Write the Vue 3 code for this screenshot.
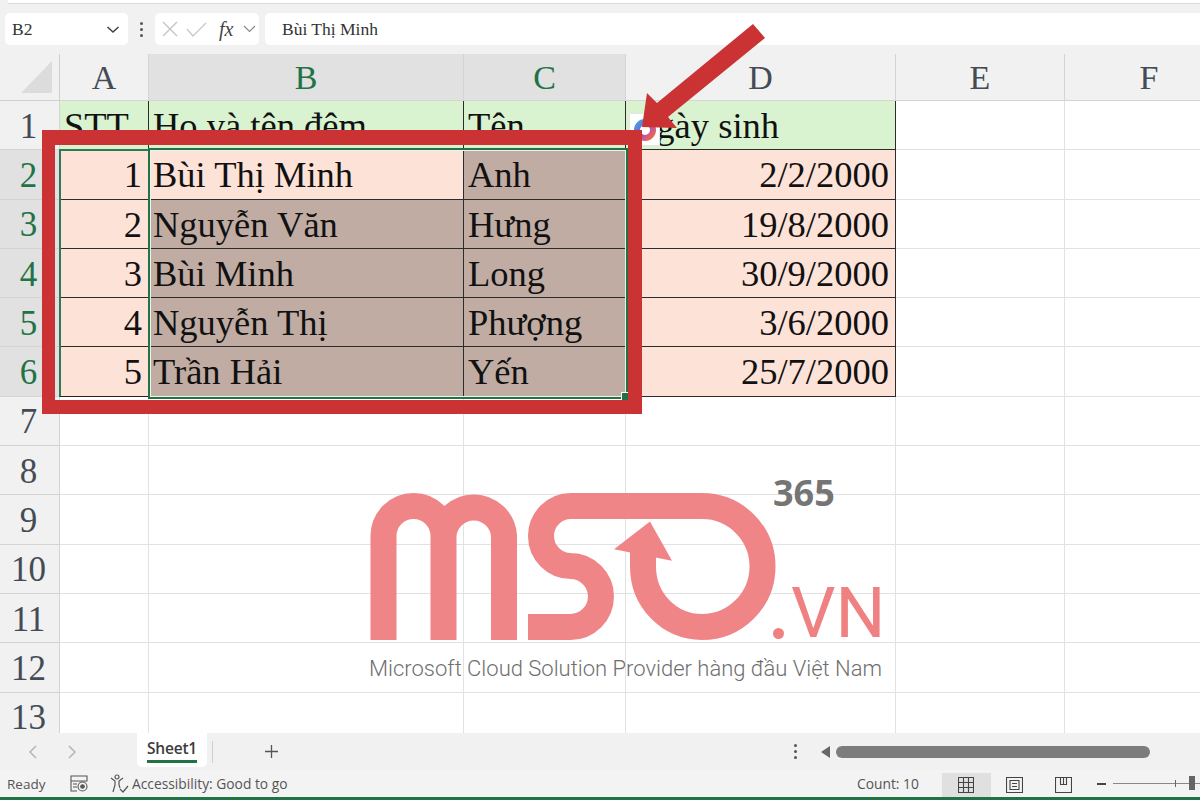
<script setup>
const cols = ['A', 'B', 'C', 'D', 'E', 'F']
const rowNums = Array.from({ length: 13 }, (_, i) => i + 1)
const data = {
  1: [['STT', 'head'], ['Họ và tên đệm', 'head'], ['Tên', 'head'], ['Ngày sinh', 'head']],
  2: [['1', 'pink num'], ['Bùi Thị Minh', 'pink'], ['Anh', 'brown'], ['2/2/2000', 'pink num']],
  3: [['2', 'pink num'], ['Nguyễn Văn', 'brown'], ['Hưng', 'brown'], ['19/8/2000', 'pink num']],
  4: [['3', 'pink num'], ['Bùi Minh', 'brown'], ['Long', 'brown'], ['30/9/2000', 'pink num']],
  5: [['4', 'pink num'], ['Nguyễn Thị', 'brown'], ['Phượng', 'brown'], ['3/6/2000', 'pink num']],
  6: [['5', 'pink num'], ['Trần Hải', 'brown'], ['Yến', 'brown'], ['25/7/2000', 'pink num']],
}
const cellsFor = (n) => {
  const filled = data[n] || []
  return cols.map((c, i) => {
    const f = filled[i]
    return { key: n + c, text: f ? f[0] : '', cls: f ? 'filled ' + f[1] : '' }
  })
}
const isActiveCol = (c) => c === 'B' || c === 'C'
const isActiveRow = (n) => n >= 2 && n <= 6
</script>

<template>
  <div class="page">
    <div class="ribbon-edge"></div>

    <div class="formula-row">
      <div class="box name-box">
        <span>B2</span>
        <svg width="14" height="9" viewBox="0 0 14 9"><path d="M1.5 2l5.5 5 5.500-5" fill="none" stroke="#444" stroke-width="1.6"/></svg>
      </div>
      <div class="dots"><i></i><i></i><i></i></div>
      <div class="box fx-box">
        <svg width="18" height="18" viewBox="0 0 18 18"><path d="M2 2l14 14M16 2L2 16" stroke="#c4c4c4" stroke-width="1.4" fill="none"/></svg>
        <svg width="22" height="18" viewBox="0 0 22 18"><path d="M2 9l6 7L21 3" stroke="#c9c9c9" stroke-width="1.4" fill="none"/></svg>
        <span class="fx">fx</span>
        <svg width="13" height="8" viewBox="0 0 13 8"><path d="M1 1l5.500 5.500L12 1" stroke="#8a8a8a" stroke-width="1.2" fill="none"/></svg>
      </div>
      <div class="box formula">Bùi Thị Minh</div>
    </div>

    <div class="sheet">
      <div class="corner"><svg width="36" height="36" viewBox="0 0 36 36"><path d="M33 2v32H2z" fill="#dcdcdc"/></svg></div>
      <div v-for="c in cols" :key="c" class="col-head" :class="{ active: isActiveCol(c) }">{{ c }}</div>
      <template v-for="n in rowNums" :key="n">
        <div class="row-head" :class="{ active: isActiveRow(n) }">{{ n }}</div>
        <div v-for="cell in cellsFor(n)" :key="cell.key" class="cell" :class="cell.cls">{{ cell.text }}</div>
      </template>
    </div>

    <div class="tabbar">
      <svg class="nav-a" width="12" height="14" viewBox="0 0 12 14"><path d="M9 1L3 7l6 6" stroke="#b5b5b5" stroke-width="1.500" fill="none"/></svg>
      <svg class="nav-b" width="12" height="14" viewBox="0 0 12 14"><path d="M3 1l6 6-6 6" stroke="#b5b5b5" stroke-width="1.500" fill="none"/></svg>
      <div class="tab"><span>Sheet1</span></div>
      <div class="tab-sep"></div>
      <svg class="plus" width="15" height="15" viewBox="0 0 15 15"><path d="M7.500 1v13M1 7.500h13" stroke="#555" stroke-width="1.300"/></svg>
      <div class="dots tab-dots"><i></i><i></i><i></i></div>
      <svg class="tri" width="9" height="12" viewBox="0 0 9 12"><path d="M9 0v12L0 6z" fill="#666"/></svg>
      <div class="scroll"></div>
    </div>

    <div class="status">
      <span class="ready">Ready</span>
      <svg class="macro" width="18" height="17" viewBox="0 0 18 17" fill="none" stroke="#555" stroke-width="1.100"><path d="M1 1h16v5H1zM1 6v10h6M3 9h4M3 12h4"/><circle cx="12.500" cy="11.500" r="4.500"/><circle cx="12.500" cy="11.500" r="1.800" fill="#555"/></svg>
      <svg class="access" width="19" height="20" viewBox="0 0 19 20" fill="none" stroke="#555" stroke-width="1.200"><circle cx="7" cy="3" r="2"/><path d="M1 4l4 3v4l-2 7M13 4L9 7v4l1 3M10 15l3 3 5-6"/></svg>
      <span class="access-text">Accessibility: Good to go</span>
      <span class="count">Count: 10</span>
      <div class="view on">
        <svg width="16" height="16" viewBox="0 0 16 16" fill="none" stroke="#444" stroke-width="1.100"><path d="M.5.5h15v15H.5zM5.500.5v15M10.500.5v15M.5 5.500h15M.5 10.500h15"/></svg>
      </div>
      <div class="view">
        <svg width="17" height="16" viewBox="0 0 17 16" fill="none" stroke="#444" stroke-width="1.100"><path d="M.5.5h16v15H.5zM4 3.500h9v9H4zM6 6.500h5M6 9.500h5"/></svg>
      </div>
      <div class="view">
        <svg width="17" height="16" viewBox="0 0 17 16" fill="none" stroke="#444" stroke-width="1.100"><path d="M.5.5h16v15H.5zM5.500.5v7h6v-7M8.500.5v7"/></svg>
      </div>
      <div class="zoomer">
        <i class="minus"></i>
        <div class="track"><i class="tick"></i><i class="thumb"></i></div>
      </div>
    </div>
    <div class="greenline"></div>

    <!-- overlays -->
    <div class="selbox sel-a"></div>
    <div class="selbox sel-main"><i class="handle"></i></div>

    <div class="stamp"><svg width="22" height="22" viewBox="0 0 22 22"><defs><linearGradient id="stampGrad" x1="0" y1="0" x2="1" y2="1"><stop offset="0" stop-color="#37a3e0"/><stop offset=".5" stop-color="#a44fd0"/><stop offset="1" stop-color="#f5683c"/></linearGradient></defs><circle cx="11" cy="11" r="8" fill="none" stroke="url(#stampGrad)" stroke-width="6"/></svg></div>

    <div class="redbox"></div>
    <svg class="arrow" width="140" height="120" viewBox="630 20 140 120">
      <path d="M753 24L765 38 668 117 677 128 642 127 647 93 657 103z" fill="#cb3234"/>
    </svg>

    <div class="logo">
      <svg class="logo-svg" width="420" height="160" viewBox="360 485 420 160" fill="none" stroke="#f08183" stroke-width="26">
        <path d="M383.500 640V536a30 30 0 0 1 60 0V640M443.500 536a30.300 30.300 0 0 1 60.500 0V640"/>
        <path d="M528 627H570.500a30.500 30.500 0 0 0 0-61H571a30 30 0 0 1 0-60H702a60.500 60.500 0 0 1 0 121c-33 0-59-27-59-60.500V552"/>
        <path d="M650 521.500L614 549.300 672 560.700z" fill="#f08183" stroke="none"/>
      </svg>
      <span class="l365">365</span>
      <span class="lvn"><i class="ldot"></i>VN</span>
      <span class="ltag">Microsoft Cloud Solution Provider hàng đầu Việt Nam</span>
    </div>
  </div>
</template>

<style scoped>
.page {
  position: relative;
  width: 1200px;
  height: 800px;
  overflow: hidden;
  display: flex;
  flex-direction: column;
  background: #f1f1f1;
  font-family: "Liberation Serif", serif;
}
.ribbon-edge {
  height: 3px;
  margin-left: 8px;
  flex: none;
  background: #fff;
  border-bottom: 1px solid #dcdcdc;
  box-sizing: content-box;
  margin-bottom: 9px;
}
.formula-row {
  flex: none;
  height: 32px;
  display: flex;
  align-items: stretch;
  padding-left: 5px;
  margin-bottom: 9px;
}
.box {
  background: #fff;
  border-radius: 5px;
  display: flex;
  align-items: center;
}
.name-box {
  width: 123px;
  justify-content: space-between;
  padding: 0 8px 0 7px;
  box-sizing: border-box;
  font-size: 17.500px;
  color: #333;
}
.dots {
  display: flex;
  flex-direction: column;
  justify-content: center;
  gap: 3px;
  width: 27px;
  align-items: center;
}
.dots i {
  width: 3px;
  height: 3px;
  background: #555;
  border-radius: 50%;
}
.fx-box {
  width: 104px;
  padding-left: 6px;
  gap: 6px;
  box-sizing: border-box;
}
.fx {
  font-style: italic;
  font-size: 20px;
  color: #444;
  width: 24px;
  margin-left: 6px;
}
.fx-box svg:last-child { margin-left: -6px; }
.formula {
  margin-left: 6px;
  flex: 1;
  padding-left: 17px;
  font-size: 17.500px;
  color: #333;
  border-radius: 5px 0 0 5px;
}
.sheet {
  flex: none;
  height: 679px;
  overflow: hidden;
  display: grid;
  grid-template-columns: 60px 89px 315px 162px 270px 169px 169px;
  grid-auto-rows: 49.3px;
  grid-template-rows: 47px;
  background: #fff;
}
.corner {
  background: #f1f1f1;
  display: flex;
  align-items: center;
  justify-content: flex-end;
  padding-right: 4px;
  border-right: 1px solid #cfcfcf;
  border-bottom: 1px solid #cfcfcf;
  box-sizing: border-box;
}
.col-head, .row-head {
  display: flex;
  align-items: center;
  justify-content: center;
  background: #f1f1f1;
  color: #444b55;
  box-sizing: border-box;
  border-right: 1px solid #d4d4d4;
  border-bottom: 1px solid #d4d4d4;
  font-size: 34px;
}
.col-head { padding-top: 2px; }
.row-head { padding-right: 2px; padding-top: 3px; font-size: 35px; }
.col-head.active, .row-head.active {
  background: #e1e1e1;
  color: #217346;
}
.cell {
  box-sizing: border-box;
  border-right: 1px solid #e2e2e2;
  border-bottom: 1px solid #e2e2e2;
  font-size: 36.500px;
  color: #111;
  line-height: 49px;
  padding: 0 6px 0 4px;
  white-space: nowrap;
  overflow: hidden;
}
.filled {
  border-right: 1px solid #2c2c2c;
  border-bottom: 1px solid #2c2c2c;
}
.head { background: #d9f2d0; }
.pink { background: #fde2d7; }
.brown { background: #c0aca3; }
.num { text-align: right; }
.tabbar {
  flex: none;
  height: 37px;
  display: flex;
  align-items: center;
  background: #f1f1f1;
  font-family: "Open Sans", sans-serif;
}
.nav-a { margin-left: 27px; }
.nav-b { margin-left: 27px; }
.tab {
  margin-left: 59px;
  width: 70px;
  height: 34px;
  align-self: flex-start;
  background: #fff;
  border-radius: 0 0 5px 5px;
  box-sizing: border-box;
  padding: 3px 10px 0;
}
.tab span {
  display: block;
  font-size: 15.500px;
  font-weight: 600;
  color: #3c3c3c;
  border-bottom: 3px solid #217346;
  line-height: 24px;
  letter-spacing: -.2px;
  white-space: nowrap;
}
.tab-sep {
  width: 1px;
  height: 22px;
  background: #d0d0d0;
  margin-left: 5px;
}
.plus { margin-left: 51px; }
.tab-dots { margin-left: 515px; width: 3px; }
.tri { margin-left: 24px; }
.scroll {
  margin-left: 6px;
  width: 314px;
  height: 12px;
  background: #7c7c7c;
  border-radius: 6px;
}
.status {
  flex: none;
  height: 27px;
  display: flex;
  align-items: center;
  background: #f3f3f3;
  font-family: "Open Sans", sans-serif;
  font-size: 13.800px;
  color: #555;
}
.ready { margin-left: 7px; width: 63px; font-size: 13.500px; }
.macro { flex: none; }
.access { margin-left: 22px; flex: none; }
.access-text { margin-left: 3px; width: 725px; white-space: nowrap; }
.count { width: 85px; white-space: nowrap; }
.view {
  width: 49px;
  height: 24px;
  margin-top: 3px;
  display: flex;
  align-items: center;
  justify-content: center;
}
.view.on { background: #e0e0e0; }
.view svg { margin-left: -2px; }
.zoomer {
  display: flex;
  align-items: center;
  margin-left: 8px;
  flex: 1;
}
.minus {
  width: 9px;
  height: 2px;
  background: #444;
}
.track {
  position: relative;
  margin-left: 7px;
  flex: 1;
  height: 1px;
  background: #888;
}
.tick {
  position: absolute;
  left: 62px;
  top: -3px;
  width: 1px;
  height: 7px;
  background: #666;
}
.thumb {
  position: absolute;
  left: 76px;
  top: -7px;
  width: 6px;
  height: 14px;
  background: #666;
}
.greenline {
  flex: none;
  height: 3px;
  background: #217346;
}
.selbox {
  position: absolute;
  box-sizing: border-box;
  pointer-events: none;
}
.sel-a {
  left: 59px;
  top: 149px;
  width: 91px;
  height: 248px;
  border: 2px solid #2f7a55;
  border-bottom-color: #222;
  border-bottom-width: 1px;
}
.sel-main {
  left: 148px;
  top: 148px;
  width: 480px;
  height: 251px;
  border: 2px solid #217346;
  outline: 1px solid #e8f3ea;
  outline-offset: -3px;
}
.handle {
  position: absolute;
  right: -3px;
  bottom: -3px;
  width: 7px;
  height: 7px;
  background: #217346;
  outline: 1px solid #fff;
}
.stamp {
  position: absolute;
  left: 629px;
  top: 113px;
  width: 31px;
  height: 33px;
  background: #fff;
  border: 1px solid #e5e5e5;
  box-sizing: border-box;
  display: flex;
  align-items: center;
  justify-content: center;
}
.redbox {
  position: absolute;
  left: 42px;
  top: 130px;
  width: 600px;
  height: 284px;
  box-sizing: border-box;
  border: solid #cb3234;
  border-width: 15px 14px 14px 13px;
}
.arrow {
  position: absolute;
  left: 630px;
  top: 20px;
}
.logo {
  position: absolute;
  left: 360px;
  top: 470px;
  width: 540px;
  height: 220px;
}
.logo-svg {
  position: absolute;
  left: 0;
  top: 15px;
  opacity: .96;
}
.l365 {
  position: absolute;
  left: 413px;
  top: 0;
  font: 700 36px/46px "Open Sans", sans-serif;
  color: #757575;
}
.lvn {
  position: absolute;
  left: 413px;
  top: 103px;
  font: 400 70px/80px Roboto, sans-serif;
  color: #f08183;
  padding-left: 18px;
}
.ldot {
  position: absolute;
  left: 0;
  bottom: 14px;
  width: 11px;
  height: 11px;
  border-radius: 50%;
  background: #f08183;
}
.ltag {
  position: absolute;
  left: 9px;
  top: 185px;
  font: 300 22px/28px Roboto, sans-serif;
  color: #6f6f6f;
  white-space: nowrap;
}
</style>
